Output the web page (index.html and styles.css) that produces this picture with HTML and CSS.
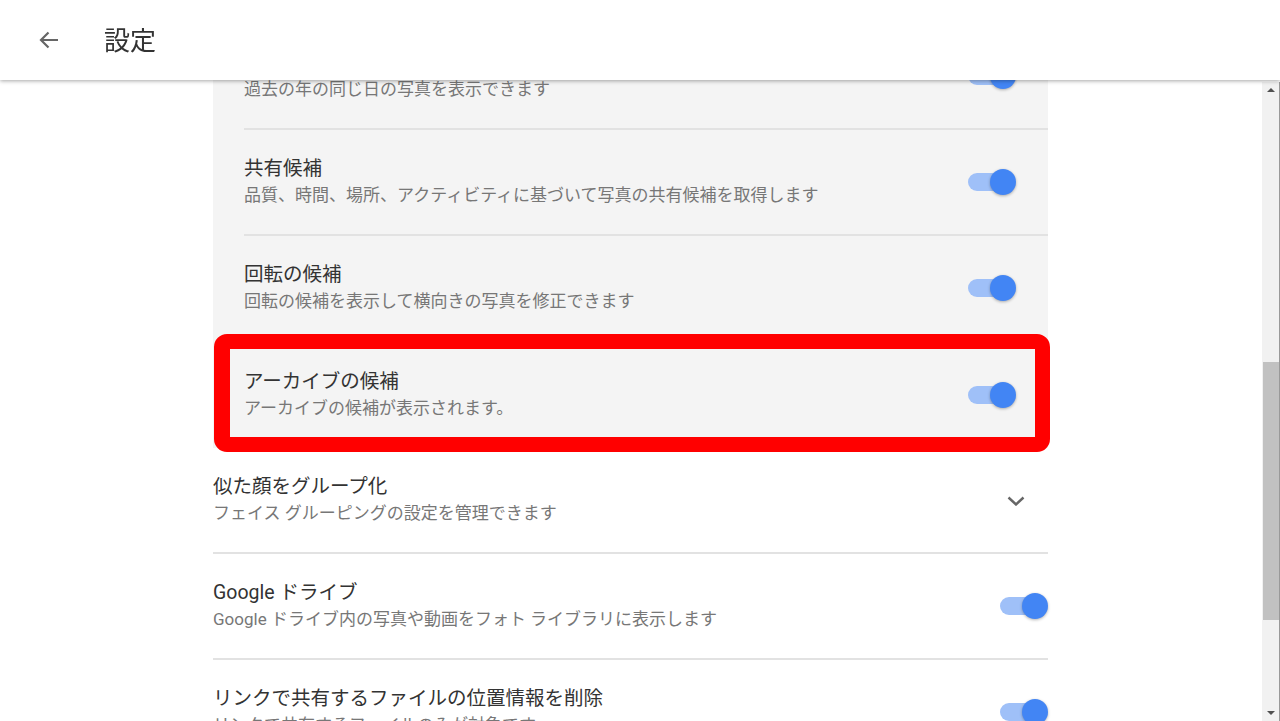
FILE: index.html
```html
<!DOCTYPE html>
<html lang="ja">
<head>
<meta charset="utf-8">
<title>設定</title>
<link rel="stylesheet" href="styles.css">
</head>
<body>
<header class="appbar">
  <svg class="back" width="24" height="24" viewBox="0 0 24 24"><path d="M21 12H4.5M11.5 4.5 4 12l7.5 7.5" fill="none" stroke="#666" stroke-width="2.2"/></svg>
  <h1 class="appbar-title">設定</h1>
</header>
<div class="page">
  <main class="content">
    <div class="list">
      <div class="group">
        <div class="item">
          <div class="item-body">
            <div class="text"><div class="title">思い出</div><div class="sub">過去の年の同じ日の写真を表示できます</div></div>
            <div class="switch"><span class="track"></span><span class="thumb"></span></div>
          </div>
        </div>
        <div class="item">
          <div class="item-body">
            <div class="text"><div class="title">共有候補</div><div class="sub">品質、時間、場所、アクティビティに基づいて写真の共有候補を取得します</div></div>
            <div class="switch"><span class="track"></span><span class="thumb"></span></div>
          </div>
        </div>
        <div class="item">
          <div class="item-body">
            <div class="text"><div class="title">回転の候補</div><div class="sub">回転の候補を表示して横向きの写真を修正できます</div></div>
            <div class="switch"><span class="track"></span><span class="thumb"></span></div>
          </div>
        </div>
        <div class="item highlight">
          <div class="item-body last">
            <div class="text"><div class="title">アーカイブの候補</div><div class="sub">アーカイブの候補が表示されます。</div></div>
            <div class="switch"><span class="track"></span><span class="thumb"></span></div>
          </div>
        </div>
      </div>
      <div class="item plain">
        <div class="item-body chev-row">
          <div class="text"><div class="title">似た顔をグループ化</div><div class="sub">フェイス グルーピングの設定を管理できます</div></div>
          <svg class="chevron" width="18" height="10" viewBox="0 0 18 10"><path d="M1.5 1.5 9 8.5l7.5-7" fill="none" stroke="#666" stroke-width="2.4"/></svg>
        </div>
      </div>
      <div class="item plain">
        <div class="item-body">
          <div class="text"><div class="title">Google ドライブ</div><div class="sub">Google ドライブ内の写真や動画をフォト ライブラリに表示します</div></div>
          <div class="switch"><span class="track"></span><span class="thumb"></span></div>
        </div>
      </div>
      <div class="item plain">
        <div class="item-body">
          <div class="text"><div class="title">リンクで共有するファイルの位置情報を削除</div><div class="sub">リンクで共有するファイルのみが対象です</div></div>
          <div class="switch"><span class="track"></span><span class="thumb"></span></div>
        </div>
      </div>
    </div>
  </main>
  <div class="scrollbar">
    <div class="sb-arrow up"></div>
    <div class="sb-rail"><div class="sb-thumb"></div></div>
    <div class="sb-arrow down"></div>
  </div>
</div>
</body>
</html>
```

FILE: styles.css
```css
* { box-sizing: border-box; }
html, body { margin: 0; padding: 0; height: 100%; }
body {
  font-family: Roboto, "Noto Sans CJK JP", sans-serif;
  background: #fff;
  color: #333;
  overflow: hidden;
}
.appbar {
  position: fixed;
  top: 0; left: 0; right: 0;
  height: 80px;
  background: #fff;
  display: flex;
  align-items: center;
  box-shadow: 0 1px 4px rgba(0,0,0,0.35);
  z-index: 10;
}
.back { margin-left: 37px; }
.appbar-title {
  margin: 0 0 3px 43px;
  font-size: 26px;
  font-weight: 400;
  color: #333;
  letter-spacing: 0;
}
.page {
  display: flex;
  height: 100vh;
}
.content {
  flex: 1;
  overflow: hidden;
  padding-top: 24px;
}
.list {
  margin-left: 213px;
  width: 835px;
}
.group { background: #f4f4f4; }
.item { padding-left: 31px; padding-right: 32px; }
.item.plain { padding: 0; }
.item-body {
  height: 106px;
  border-bottom: 2px solid #e2e2e2;
  display: flex;
  align-items: center;
  justify-content: space-between;
}
.group .item-body { margin-right: -32px; padding-right: 32px; }
.item-body.last { border-bottom: none; }
.text { display: flex; flex-direction: column; }
.title {
  font-size: 19.5px;
  line-height: 26px;
  color: #333;
}
.sub {
  font-size: 17px;
  line-height: 26px;
  color: #777;
}
.switch {
  position: relative;
  width: 48px;
  height: 26px;
  flex: none;
}
.track {
  position: absolute;
  left: 0; top: 4px;
  width: 38px; height: 18px;
  border-radius: 9px;
  background: #9fc0f8;
}
.thumb {
  position: absolute;
  right: 0; top: 0;
  width: 26px; height: 26px;
  border-radius: 50%;
  background: #4285f4;
  box-shadow: 0 1px 3px rgba(0,0,0,0.3);
}
.chev-row { padding-right: 23px; }
.chevron { flex: none; margin-top: 1px; }
.highlight { position: relative; }
.highlight::after {
  content: "";
  position: absolute;
  top: -8px; bottom: -4px; left: 1px; right: -2px;
  border: 15px solid #ff0000;
  border-left-width: 16px;
  border-radius: 13px;
  pointer-events: none;
}
.scrollbar {
  width: 18px;
  margin-top: 82px;
  background: #f1f1f1;
  border-right: 1px solid #999;
  display: flex;
  flex-direction: column;
  flex: none;
}
.sb-arrow {
  height: 16px;
  display: flex;
  align-items: center;
  justify-content: center;
}
.sb-arrow.up::before {
  content: "";
  border-left: 4px solid transparent;
  border-right: 4px solid transparent;
  border-bottom: 4px solid #505050;
}
.sb-arrow.down::before {
  content: "";
  border-left: 4px solid transparent;
  border-right: 4px solid transparent;
  border-top: 4px solid #505050;
}
.sb-rail { flex: 1; padding-top: 264px; padding-bottom: 85px; padding-left: 1px; }
.sb-thumb { height: 258px; background: #c1c1c1; }
```
